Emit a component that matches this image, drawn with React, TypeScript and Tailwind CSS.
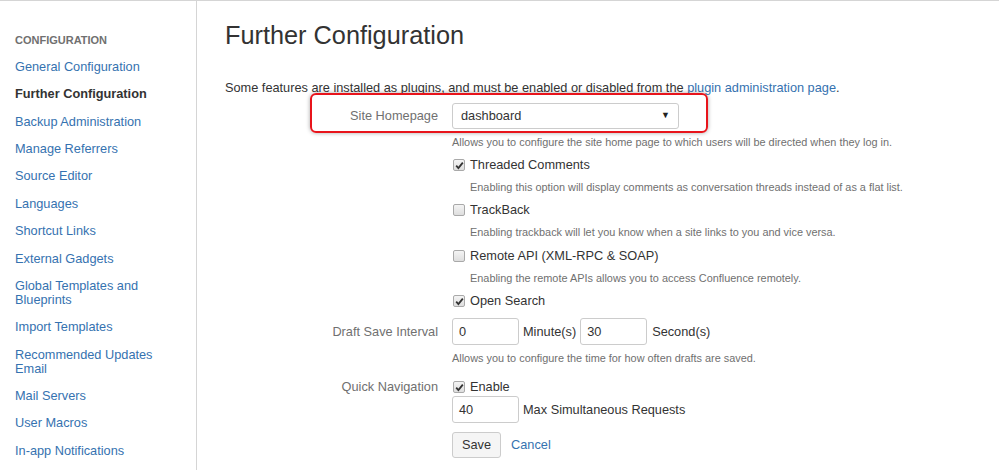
// Further Configuration admin page (Confluence-style)
import type { ReactNode } from "react";

const NAV_ITEMS = [
  "General Configuration",
  "Further Configuration",
  "Backup Administration",
  "Manage Referrers",
  "Source Editor",
  "Languages",
  "Shortcut Links",
  "External Gadgets",
  "Global Templates and Blueprints",
  "Import Templates",
  "Recommended Updates Email",
  "Mail Servers",
  "User Macros",
  "In-app Notifications",
];

const ACTIVE = "Further Configuration";

function Checkbox({ checked }: { checked: boolean }) {
  return (
    <span className="flex h-[12px] w-[12px] shrink-0 items-center justify-center rounded-[2px] border border-[#a9a9a9] bg-gradient-to-b from-[#f4f4f4] to-[#dedede]">
      {checked && (
        <svg width="9" height="9" viewBox="0 0 9 9">
          <path d="M1.2 4.6 L3.4 7 L7.8 1.6" fill="none" stroke="#333" strokeWidth="1.8" />
        </svg>
      )}
    </span>
  );
}

function CheckOption({
  label,
  checked,
  desc,
  className = "",
}: {
  label: string;
  checked: boolean;
  desc?: string;
  className?: string;
}) {
  return (
    <div className={className}>
      <div className="flex h-[16px] items-center">
        <span className="flex w-[18px] pl-[1px]">
          <Checkbox checked={checked} />
        </span>
        <span className="text-[12.75px] leading-[16px] text-[#333]">{label}</span>
      </div>
      {desc && (
        <p className="mt-[7px] pl-[18px] text-[10.9px] leading-[14px] text-[#707070]">{desc}</p>
      )}
    </div>
  );
}

function FieldRow({ label, children, className = "" }: { label?: string; children: ReactNode; className?: string }) {
  return (
    <div className={`flex ${className}`}>
      <div className="w-[227px] shrink-0 pr-[14px] text-right text-[12.75px] text-[#707070]">{label}</div>
      <div className="flex-1">{children}</div>
    </div>
  );
}

function TextInput({ value }: { value: string }) {
  return (
    <span className="flex h-[27px] w-[67px] items-center rounded-[3px] border border-[#ccc] bg-white pl-[6px] text-[12.75px] text-[#333]">
      {value}
    </span>
  );
}

export default function App() {
  return (
    <div className="flex h-[470px] w-full overflow-hidden border-t border-[#d5d5d5] bg-white font-['Liberation_Sans',Arial,sans-serif]">
      <aside className="w-[197px] shrink-0 border-r border-[#d5d5d5] pl-[15px] pr-[16px] pt-[32px]">
        <h4 className="mb-[6.3px] text-[11px] font-bold uppercase leading-[14px] text-[#707070]">Configuration</h4>
        <ul>
          {NAV_ITEMS.map((item) => (
            <li
              key={item}
              className={
                item === ACTIVE
                  ? "py-[6.7px] text-[12.75px] font-bold leading-[14px] text-[#333]"
                  : "py-[6.7px] text-[12.75px] leading-[14px] text-[#3572b0]"
              }
            >
              {item}
            </li>
          ))}
        </ul>
      </aside>

      <main className="flex-1 pl-[28px] pt-[19px]">
        <h1 className="text-[25.3px] leading-[30px] text-[#333]">Further Configuration</h1>
        <p className="mt-[30px] text-[12.75px] leading-[16px] text-[#333]">
          Some features are installed as plugins, and must be enabled or disabled from the{" "}
          <span className="text-[#3572b0]">plugin administration page</span>.
        </p>

        <div className="relative mt-[7px]">
          <div className="pointer-events-none absolute left-[85px] top-[-10px] h-[40px] w-[398px] rounded-[6px] border-2 border-[#e8141b] shadow-[0_0_4px_rgba(0,0,0,0.35)]" />
          <FieldRow label="Site Homepage" className="items-center">
            <div className="flex h-[26px] w-[227px] items-center justify-between rounded-[3px] border border-[#ccc] bg-white pl-[8px] pr-[8px] text-[12.75px] text-[#333]">
              <span>dashboard</span>
              <span className="text-[9px] text-[#222]">▼</span>
            </div>
          </FieldRow>
        </div>

        <FieldRow className="mt-[6px]">
          <p className="text-[10.9px] leading-[14px] text-[#707070]">
            Allows you to configure the site home page to which users will be directed when they log in.
          </p>
          <CheckOption
            className="mt-[8px]"
            label="Threaded Comments"
            checked
            desc="Enabling this option will display comments as conversation threads instead of as a flat list."
          />
          <CheckOption
            className="mt-[8px]"
            label="TrackBack"
            checked={false}
            desc="Enabling trackback will let you know when a site links to you and vice versa."
          />
          <CheckOption
            className="mt-[8.5px]"
            label="Remote API (XML-RPC & SOAP)"
            checked={false}
            desc="Enabling the remote APIs allows you to access Confluence remotely."
          />
          <CheckOption className="mt-[8.5px]" label="Open Search" checked />
        </FieldRow>

        <FieldRow label="Draft Save Interval" className="mt-[9px] items-center">
          <div className="flex items-center text-[12.75px] text-[#333]">
            <TextInput value="0" />
            <span className="ml-[4px] mr-[4px]">Minute(s)</span>
            <TextInput value="30" />
            <span className="ml-[5px]">Second(s)</span>
          </div>
        </FieldRow>
        <FieldRow className="mt-[6px]">
          <p className="text-[10.9px] leading-[14px] text-[#707070]">
            Allows you to configure the time for how often drafts are saved.
          </p>
        </FieldRow>

        <FieldRow label="Quick Navigation" className="mt-[14px] leading-[16px]">
          <CheckOption label="Enable" checked />
          <div className="mt-[1px] flex items-center text-[12.75px] text-[#333]">
            <TextInput value="40" />
            <span className="ml-[4px]">Max Simultaneous Requests</span>
          </div>
          <div className="mt-[9px] flex items-center">
            <button
              type="button"
              className="h-[26px] rounded-[3px] border border-[#ccc] bg-[#f5f5f5] px-[9px] text-[12.75px] text-[#333]"
            >
              Save
            </button>
            <span className="ml-[10px] text-[12.75px] text-[#3572b0]">Cancel</span>
          </div>
        </FieldRow>
      </main>
    </div>
  );
}
